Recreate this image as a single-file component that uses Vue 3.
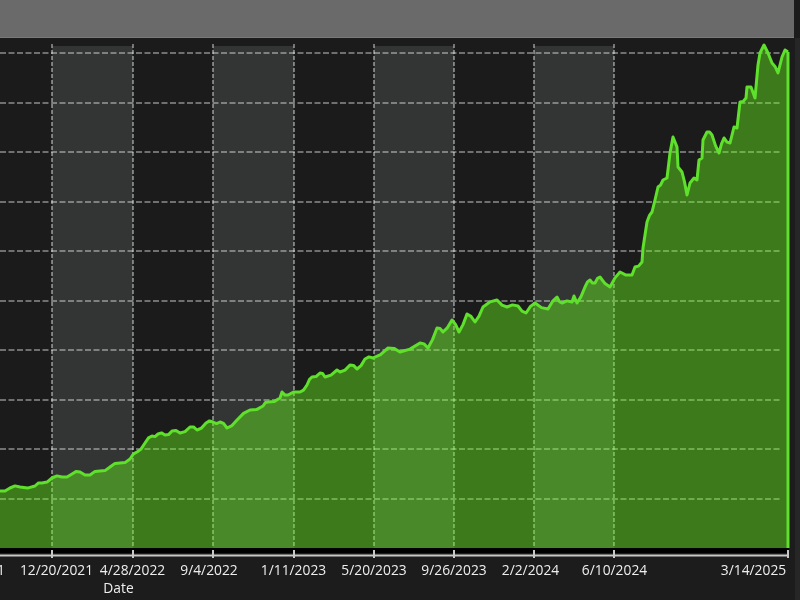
<script setup>
// x position of each vertical grid line, with its date label
const ticks = [
  { x: 52, label: '12/20/2021', lx: 56.5 },
  { x: 133, label: '4/28/2022', lx: 132.5 },
  { x: 213, label: '9/4/2022', lx: 209 },
  { x: 294, label: '1/11/2023', lx: 293.5 },
  { x: 374, label: '5/20/2023', lx: 374 },
  { x: 454, label: '9/26/2023', lx: 454 },
  { x: 534, label: '2/2/2024', lx: 530.5 },
  { x: 614, label: '6/10/2024', lx: 614.5 },
  { x: 788, label: '3/14/2025', lx: 753.5 }
]

const rows = [53, 103, 152, 202, 251, 301, 350, 400, 449, 499]
const bands = [[52, 133], [213, 294], [374, 454], [534, 614]]

// curve read off the reference, page coordinates
const pts = [
  [0, 491], [10, 488], [20, 487], [35, 486], [42, 483], [52, 478], [62, 477], [72, 474], [80, 472], [90, 475],
  [100, 471], [110, 467], [120, 463], [130, 459], [137, 452], [145, 443], [152, 436], [158, 434], [165, 435],
  [172, 431], [180, 433], [190, 427], [197, 430], [206, 423], [213, 422], [220, 422], [227, 428], [237, 420],
  [250, 410], [263, 406], [268, 402], [280, 398], [282, 392], [288, 395], [300, 392], [307, 385], [312, 377],
  [320, 373], [325, 377], [337, 370], [340, 372], [350, 365], [357, 369], [365, 359], [373, 358], [388, 348],
  [400, 352], [420, 343], [428, 348], [437, 328], [443, 332], [452, 320], [459, 332], [467, 314], [475, 322],
  [483, 307], [497, 300], [507, 307], [518, 306], [526, 313], [535, 303], [548, 309], [557, 297], [562, 303],
  [572, 302], [574, 296], [577, 303], [585, 287], [590, 280], [595, 283], [600, 277], [610, 287], [620, 272],
  [632, 275], [635, 267], [642, 262], [643, 248], [647, 222], [652, 212], [655, 200], [658, 187], [663, 180],
  [667, 178], [670, 153], [673, 137], [677, 147], [678, 167], [682, 172], [687, 195], [690, 183], [694, 178],
  [697, 180], [699, 160], [702, 158], [703, 140], [707, 132], [712, 135], [719, 153], [724, 138], [730, 143],
  [734, 127], [737, 128], [740, 102], [746, 98], [747, 87], [751, 87], [755, 98], [758, 65], [760, 53], [764, 45],
  [768, 53], [772, 63], [778, 73], [782, 57], [785, 50], [788, 52]
]

// long segments get a midpoint with a small wobble, the real series is noisier than what was read off
const noisy = []
pts.forEach((p, i) => {
  noisy.push(p)
  const n = pts[i + 1]
  if (n && n[0] - p[0] >= 5) {
    const wobble = (i % 2 ? -1 : 1) * 1.6
    noisy.push([(p[0] + n[0]) / 2, (p[1] + n[1]) / 2 + wobble])
  }
})

const line = noisy.map(p => p.join(',')).join(' ')
const area = line + ' 788,548 0,548'
</script>

<template>
  <div class="app">
    <div class="topbar"></div>
    <svg class="chart" width="800" height="562" viewBox="0 38 800 562">
      <rect x="795" y="38" width="5" height="562" fill="#262626" />
      <rect x="0" y="40" width="789" height="508" fill="#1b1b1b" />
      <rect
        v-for="b in bands" :key="b[0]"
        :x="b[0]" y="46" :width="b[1] - b[0]" height="502"
        fill="#333434"
      />
      <g class="grid">
        <line v-for="y in rows" :key="y" class="h" x1="0" :y1="y" x2="782" :y2="y" />
        <line v-for="t in ticks.slice(0, 8)" :key="t.x" class="v" :x1="t.x" y1="44" :x2="t.x" y2="548" />
      </g>
      <!-- translucent, so the bands and grid show through the area -->
      <polygon :points="area" fill="#6cff1d" fill-opacity="0.42" />
      <polyline :points="line" class="curve" />
      <line x1="788" y1="52" x2="788" y2="548" class="curve" />

      <rect x="0" y="548" width="789" height="5" fill="#000" />
      <g class="axis">
        <line x1="0" y1="555.5" x2="788" y2="555.5" />
        <line v-for="t in ticks" :key="t.x" :x1="t.x" y1="550" :x2="t.x" y2="558" />
      </g>
      <g class="labels">
        <text x="5" y="575" text-anchor="end">1</text>
        <text v-for="t in ticks" :key="t.label" :x="t.lx" y="575" text-anchor="middle">{{ t.label }}</text>
        <text x="118.5" y="593" text-anchor="middle">Date</text>
      </g>
    </svg>
  </div>
</template>

<style scoped>
.app { width: 800px; height: 600px; background: #1c1c1c; display: flex; flex-direction: column; overflow: hidden; }
.topbar { width: 794px; height: 38px; background: #6a6a6a; border-bottom: 1px solid #7a7a7a; box-sizing: border-box; }
.chart { display: block; filter: blur(0.5px); }
.grid line { stroke: #fff; stroke-opacity: 0.5; stroke-width: 1.6; }
.grid .h { stroke-dasharray: 6 2.5; }
.grid .v { stroke-dasharray: 4 2; }
.curve { fill: none; stroke: #5fe02c; stroke-width: 3; stroke-linejoin: round; }
.axis line { stroke: #c8c8c8; stroke-width: 2; }
.labels text { font-family: "Open Sans", "Noto Sans", sans-serif; font-size: 13.8px; fill: #eee; }
</style>

<style>
html, body { background: #1c1c1c; }
</style>
